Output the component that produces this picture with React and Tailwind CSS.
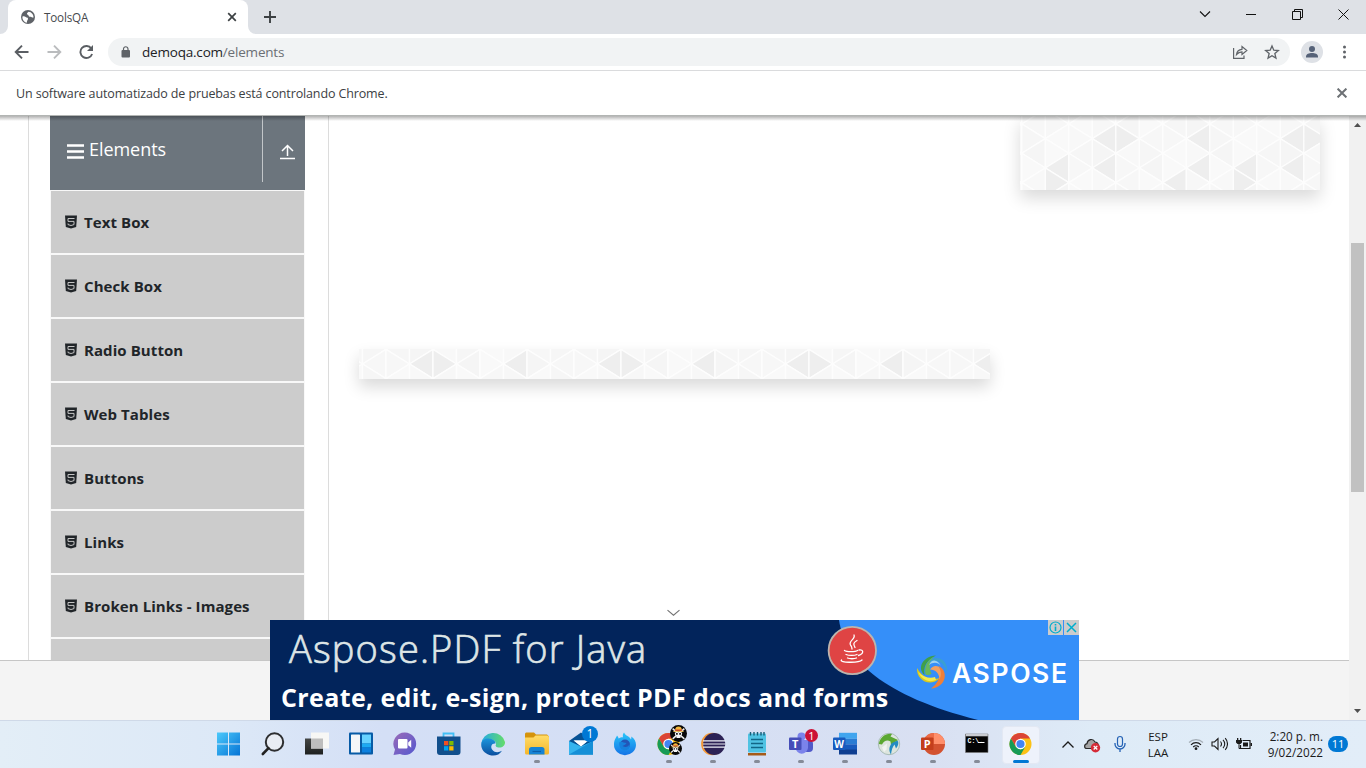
import React from "react";

const COL = 23.5;
const ROW = 29.3;

function TrianglePattern({ width, height, originX, originY, darkLeft, darkRight }) {
  // Even columns carry nodes at originY + n*ROW, odd ones are shifted by half a row.
  const shades = ["#f5f5f5", "#f7f7f7", "#f9f9f9", "#f6f6f6", "#f9f9f9", "#f7f7f7", "#f8f8f8"];
  const cells = [];
  const columns = Math.ceil(width / COL) + 2;
  for (let k = -1; k < columns; k++) {
    for (let half = -2; half < 8; half++) {
      const x0 = originX + k * COL;
      const x1 = x0 + COL;
      const y = originY + (half * ROW) / 2;
      const isLeft = (k + half) % 2 === 0;
      const points = isLeft
        ? `${x0},${y} ${x1},${y - ROW / 2} ${x1},${y + ROW / 2}`
        : `${x1},${y} ${x0},${y - ROW / 2} ${x0},${y + ROW / 2}`;
      const key = `${k}:${half}`;
      const dark = (isLeft ? darkLeft : darkRight).includes(key);
      const seed = Math.abs(((k + 8) % 8) * 5 + half * 3 + (isLeft ? 1 : 0));
      cells.push(
        <polygon key={key} points={points} fill={dark ? "#eeeeee" : shades[seed % 7]} stroke="#fdfdfd" strokeWidth="1.3" />
      );
    }
  }
  return (
    <svg width={width} height={height} className="block overflow-hidden">
      {cells}
    </svg>
  );
}

function Html5() {
  return (
    <svg width="12" height="14" viewBox="0 0 12 14" className="shrink-0">
      <path d="M0 .5h12l-.8 11.400-5.200 1.600-5.200-1.600z" fill="#212529" />
      <path d="M9.500 3.500H3v2.900h6v3.200l-3 .9-3-.9V8.500" fill="none" stroke="#c4c4c4" strokeWidth="1" />
    </svg>
  );
}

const items = ["Text Box", "Check Box", "Radio Button", "Web Tables", "Buttons", "Links", "Broken Links - Images"];

function ChromeIcon() {
  return (
    <svg width="24" height="24" viewBox="0 0 24 24">
      <circle cx="11.500" cy="12" r="11" fill="#fbc116" />
      <path d="M1.970 6.500A11 11 0 0 1 21.030 6.500H11.500L6.740 14.750z" fill="#db4437" />
      <path d="M1.970 6.500A11 11 0 0 0 11.500 23l4.760-8.250-4.760 2.750-4.760-2.750z" fill="#169b57" />
      <circle cx="11.500" cy="12" r="5.300" fill="#fff" />
      <circle cx="11.500" cy="12" r="4.100" fill="#4285f4" />
    </svg>
  );
}

function Skull({ size }) {
  return (
    <svg width={size} height={size} viewBox="0 0 16 16">
      <circle cx="8" cy="8" r="8" fill="#080808" />
      <path d="M2.500 3.500l11 9.500M13.500 3.500l-11 9.500" stroke="#eee" strokeWidth="1.500" />
      <path d="M4.600 7h6.800c.3 2-.8 3-1.500 3.200v2H6.100v-2C5.300 10 4.300 9 4.600 7z" fill="#f5f5f5" />
      <path d="M4.800 5C4.900 2.500 6.200 1.500 8 1.500s3.100 1 3.200 3.500z" fill="#f2b83c" />
      <path d="M4.600 4.300h6.800v1.200H4.600z" fill="#d43a25" />
      <path d="M3.200 6h9.600" stroke="#efc65c" strokeWidth="1" />
      <path d="M5.700 8.400h1.600M8.700 8.400h1.600" stroke="#111" strokeWidth="1.700" />
    </svg>
  );
}

function Slot({ children, running, active }) {
  return (
    <div className="w-11 h-12 flex items-center justify-center relative shrink-0">
      {active && <div className="absolute left-[3px] top-[5px] w-[38px] h-[38px] rounded bg-[#eef2fb] border border-[#e3e8f3]" />}
      <div className="relative w-6 h-6 -mt-px">{children}</div>
      {running && <div className="absolute bottom-[6px] left-[19px] w-1.5 h-[3px] rounded-full bg-[#858b98]" />}
      {active && <div className="absolute bottom-[6px] left-[14px] w-4 h-[3px] rounded-full bg-[#0078d4]" />}
    </div>
  );
}

function S({ children }) {
  return <svg width="24" height="24" viewBox="0 0 24 24" className="block overflow-visible">{children}</svg>;
}

function Taskbar() {
  return (
    <div className="h-12 shrink-0 flex items-center border-t border-[#cfd9e8] bg-[linear-gradient(90deg,#e3eef7_0%,#dce8f7_17%,#d4dff6_28%,#d5dff4_50%,#d9e0f2_68%,#deebf7_80%,#e2edf8_100%)] pl-[207px] relative font-['Open_Sans',sans-serif]">
      <svg width="0" height="0" className="absolute">
        <defs>
          <linearGradient id="win" x1="0" y1="0" x2="1" y2="1"><stop stopColor="#4cc9fb" /><stop offset="1" stopColor="#0574d5" /></linearGradient>
          <linearGradient id="chat" x1="0" y1="0" x2="1" y2="1"><stop stopColor="#9a6bb8" /><stop offset="1" stopColor="#5458cf" /></linearGradient>
          <linearGradient id="edge" x1="0" y1="0" x2="1" y2="0"><stop stopColor="#24a9e5" /><stop offset="1" stopColor="#65dd69" /></linearGradient>
          <linearGradient id="edge2" x1="0" y1="0" x2="0" y2="1"><stop stopColor="#1b95dc" /><stop offset="1" stopColor="#0b4e9e" /></linearGradient>
          <linearGradient id="folder" x1="0" y1="0" x2="0" y2="1"><stop stopColor="#ffdc68" /><stop offset="1" stopColor="#f6b62a" /></linearGradient>
          <linearGradient id="fox" x1="0" y1="0" x2="0" y2="1"><stop stopColor="#29c6fa" /><stop offset="1" stopColor="#1473e6" /></linearGradient>
          <linearGradient id="dark" x1="0" y1="0" x2="0" y2="1"><stop stopColor="#444645" /><stop offset="1" stopColor="#1e2020" /></linearGradient>
        </defs>
      </svg>
      <Slot><S><path d="M0 .5h11v11H0zM12 .5h11v11H12zM0 12.500h11v11H0zM12 12.500h11v11H12z" fill="url(#win)" /></S></Slot>
      <Slot><S><circle cx="13.500" cy="10" r="8.700" fill="#e9edf4" stroke="#2d2e30" strokeWidth="2" /><path d="M7.500 16.200L1.800 22" stroke="#222" strokeWidth="2.600" strokeLinecap="round" /></S></Slot>
      <Slot><S><path d="M0 6.500h18v16H0z" fill="url(#dark)" /><path d="M6 .5h18v16H6z" fill="#f7f7f5" /><path d="M6 6.500h12v10H6z" fill="#bdbdbd" /></S></Slot>
      <Slot><S><rect x="0" y=".5" width="24" height="22" rx="1" fill="#075ba6" /><rect x="2" y="2.500" width="9" height="18" rx=".6" fill="#f4f6f8" /><path d="M13 2.500h9v9h-9z" fill="#67d2ff" /><path d="M13 11.500h9v4h-9z" fill="#1daaf2" /><path d="M13 15.500h9v5h-9z" fill="#0c80df" /></S></Slot>
      <Slot><S><path d="M12 .5a11.300 11.300 0 1 1-5 21.500L.5 23 2 17.500A11.300 11.300 0 0 1 12 .5z" fill="url(#chat)" /><rect x="5" y="7" width="9.500" height="9.500" rx="1" fill="#fff" /><path d="M15.200 10.500l3-2.700v8l-3-2.500z" fill="#fff" /></S></Slot>
      <Slot><S><path d="M6.500 6V1.500h10V6" fill="none" stroke="#42bff5" strokeWidth="1.800" /><path d="M0 4.500h23.500v15.500a3 3 0 0 1-3 3H3a3 3 0 0 1-3-3z" fill="#124f8c" /><path d="M7 9h4.300v4.300H7z" fill="#f25022" /><path d="M12.200 9h4.300v4.300h-4.300z" fill="#7fba00" /><path d="M7 14.200h4.300v4.300H7z" fill="#00a4ef" /><path d="M12.200 14.200h4.300v4.300h-4.300z" fill="#ffb900" /></S></Slot>
      <Slot><S><path d="M.3 12A12 11.500 0 0 1 24 10c.3 3.500-2.500 5.500-5.500 5.500-3.500 0-4.500-1.500-3.500-3C15.500 9 11.500 7 7.500 7.500 3.500 8 1 10 .3 12z" fill="url(#edge)" /><path d="M.2 12.500C.5 7 6.500 5.500 10.500 7c3 1 4 3 4 4.500-4-.5-5.500 3.500-3 6.500s6.500 2.500 9.500.7C18.500 23 13.500 24.500 8.500 23 3.500 21.500 0 17 .2 12.500z" fill="url(#edge2)" /></S></Slot>
      <Slot running><S><path d="M0 2.500C0 1 .5.500 2 .5h7l2 2h11l2 2v4H0z" fill="#d5930b" /><path d="M0 5.500h8.500l2-2H22a2 2 0 0 1 2 2V21a1.500 1.500 0 0 1-1.500 1.500h-21A1.500 1.500 0 0 1 0 21z" fill="url(#folder)" /><path d="M4 22.500v-5C4 16 5 15 6.500 15h10.500c1.500 0 2.500 1 2.500 2.500v5z" fill="#1683d4" /><path d="M7.500 19.500h8.500" stroke="#0b5ea8" strokeWidth="1.200" /></S></Slot>
      <Slot>
        <S><path d="M0 9L12 .5 24 9v13.500H0z" fill="#075294" /><path d="M4.500 8.500h15L12 14z" fill="#fff" /><path d="M0 9l12 5.500L24 9v13.500H0z" fill="#35b4ee" /><path d="M0 22.500L24 9v13.500z" fill="#158fd7" /><path d="M5 8.500h14l-7 6z" fill="#fff" /></S>
        <div className="absolute left-[13px] -top-[6px] w-4 h-4 rounded-full bg-[#0078d4] text-white text-[12px] leading-4 text-center">1</div>
      </Slot>
      <Slot><S><path d="M1 12.500C1 8 3 6 4 3.500c1 1 1.500 2 1.600 3 1.400-1 3-1.300 4.400-1.200C9.500 3.500 10 1.500 11 .5c1 2.500 3 3 5 4.500 1 .7 1.500 1.500 2 2.500.5-1 .4-2 .3-3C21.500 6.500 23 9.500 23 13a11 10.500 0 0 1-22-.5z" fill="url(#fox)" /><circle cx="12" cy="12.500" r="5" fill="#2356b8" /><path d="M6.500 10c3-1 4 1 7 1-1 2-3 2-4 3 3 2 6 1 7-2 1 4-2 7-6 6-3-.7-5-4-4-8z" fill="#1681dd" /></S></Slot>
      <Slot running>
        <ChromeIcon />
        <div className="absolute left-[13px] -top-[7px]"><Skull size={17} /></div>
        <div className="absolute left-[12px] top-[10px]"><Skull size={13} /></div>
      </Slot>
      <Slot running><S><circle cx="11.300" cy="12" r="11.200" fill="#f59a38" /><circle cx="13.200" cy="12" r="11" fill="#2c2255" /><path d="M2 8.800h22.500M2 12h22.500M2 15.200h22.500" stroke="#edf0f8" strokeWidth="1.200" /></S></Slot>
      <Slot running><S><path d="M3 21h18v2.500H3z" fill="#a65b19" /><rect x="3" y="1.500" width="18" height="19" rx="1" fill="#50c3e3" /><path d="M5.500 0v3.500M9 0v3.500M12.500 0v3.500M16 0v3.500M19 0v3.500" stroke="#175d77" strokeWidth="1.400" /><path d="M6 7.500h12M6 11.500h12M6 15.500h12" stroke="#126686" strokeWidth="1.600" /></S></Slot>
      <Slot running>
        <S><circle cx="12.500" cy="4.500" r="4" fill="#7b83eb" /><rect x="14" y="8" width="10" height="12" rx="4" fill="#5059c9" /><path d="M6.500 8h12.500v8a6.300 6.500 0 0 1-12.500 0z" fill="#7b83eb" /><rect x="0" y="5.500" width="12.500" height="12.500" rx="1" fill="#464eb8" /><text x="6.200" y="15.800" textAnchor="middle" fontSize="11" fontWeight="700" fill="#fff">T</text></S>
        <div className="absolute left-[16px] -top-[3px] w-[13px] h-[13px] rounded-full bg-[#cc1236] text-white text-[11px] leading-[13px] text-center">1</div>
      </Slot>
      <Slot running><S><path d="M6 .8h18v6H6z" fill="#41a5ee" /><path d="M6 6.800h18v5.500H6z" fill="#2b7cd3" /><path d="M6 12.300h18V18H6z" fill="#185abd" /><path d="M6 17.500h18v5H6z" fill="#103f91" /><rect x="0" y="5.500" width="12.500" height="12.500" rx="1" fill="#185abd" /><text x="6.200" y="15.500" textAnchor="middle" fontSize="10" fontWeight="700" fill="#fff">W</text></S></Slot>
      <Slot running><S><circle cx="12" cy="12" r="10.700" fill="#dde5de" stroke="#9bb1aa" strokeWidth=".8" /><path d="M1.800 12C3 5 9 1 15 2l-1.500 2.500L21 8l-7 5-.5-3.500C10 7.500 7 9 5 12.500z" fill="#5ba832" /><path d="M14 22.500c-2.500-4-2-8 1-11.500l5.500-2.500c1.500 2 1 5-1.500 8l-1.500-4c-2 2.500-3 5.500-3.500 10z" fill="#248bc1" /><path d="M5 15.500l5-4-.5 6-2.500 2.500z" fill="#f1f4f2" /></S></Slot>
      <Slot running><S><circle cx="13" cy="12" r="11" fill="#d35230" /><path d="M13 1a11 11 0 0 1 11 11H13z" fill="#ff8f6b" /><path d="M13 1v11H2A11 11 0 0 1 13 1z" fill="#ed6c47" /><rect x="0" y="5.500" width="12.500" height="12.500" rx="1" fill="#c43e1c" /><text x="6.200" y="15.700" textAnchor="middle" fontSize="11" fontWeight="700" fill="#fff">P</text></S></Slot>
      <Slot running><S><path d="M.5 2h22.500v18.500H.5z" fill="#050505" stroke="#777" strokeWidth=".6" /><path d="M.8 2h22v2.300H.8z" fill="#c9cbd0" /><text x="2.500" y="11" fontSize="6.500" fontWeight="700" fill="#fff" fontFamily="Liberation Mono, monospace">C:\.</text><path d="M13 10.500h6.500" stroke="#fff" /></S></Slot>
      <Slot active><ChromeIcon /></Slot>

      <div className="flex items-center flex-1 h-full text-[#1b1b1b] pl-[18px]">
        <svg width="14" height="10" viewBox="0 0 14 10"><path d="M1.500 7.500L7 2l5.500 5.500" fill="none" stroke="currentColor" strokeWidth="1.300" /></svg>
        <svg width="18" height="16" viewBox="0 0 18 16" className="ml-[8px]"><path d="M4 11.500C1 11.500.7 7.500 4 6.700 4.500 2 10 1 12 5c3 0 4 3 3 6.500z" fill="#a5a5a5" stroke="#292929" strokeWidth="1.200" /><circle cx="12.500" cy="10.700" r="4.700" fill="#d52b37" /><path d="M10.700 8.900l3.600 3.600M14.300 8.900l-3.600 3.600" stroke="#fff" strokeWidth="1.300" /></svg>
        <svg width="14" height="18" viewBox="0 0 14 18" className="ml-[12px] -mt-px"><rect x="4.500" y="1.500" width="5" height="10" rx="2.500" fill="none" stroke="#2462b5" strokeWidth="1.200" /><path d="M2 8v1a5 5 0 0 0 10 0V8M7 14v3" fill="none" stroke="#2462b5" strokeWidth="1.300" /></svg>
        <div className="w-[30px] ml-[16px] text-center text-[11.5px] leading-4 pt-px"><div>ESP</div><div>LAA</div></div>
        <svg width="16" height="14" viewBox="0 0 16 14" className="ml-[15px] -mt-px"><path d="M1 5.500a10 10 0 0 1 14 0" fill="none" stroke="#a5aeb7" strokeWidth="1.200" /><path d="M3 7.800a7 7 0 0 1 10 0M5.200 10a4 4 0 0 1 5.600 0" fill="none" stroke="currentColor" strokeWidth="1.200" /><circle cx="8" cy="11.700" r="1.400" fill="currentColor" /></svg>
        <svg width="17" height="16" viewBox="0 0 17 16" className="ml-[7px] -mt-px"><path d="M1 6h2.500L7 2.500v11L3.500 10H1zM9.500 5.500a4 4 0 0 1 0 5M12 3.800a6 6 0 0 1 0 8.400M14.200 2.200a8.500 8.500 0 0 1 0 11.600" fill="none" stroke="currentColor" strokeWidth="1.100" /></svg>
        <svg width="17" height="16" viewBox="0 0 17 16" className="ml-[8px] -mt-px"><path d="M6.500 4.500h7.500v8H4.500V9" fill="none" stroke="currentColor" strokeWidth="1.200" /><path d="M7 6.500h5v4H7zM0 4h6v2.500L4.500 8h-3L0 6.500zM14.500 7H16v3h-1.500zM1 2h1.300v2H1zM4 2h1.300v2H4z" fill="currentColor" /><path d="M3 7v5.500h2" fill="none" stroke="currentColor" /></svg>
        <div className="w-[70px] text-right text-[11.7px] leading-4 whitespace-nowrap -mt-px"><div>2:20 p. m.</div><div>9/02/2022</div></div>
        <div className="ml-[5px] w-[20px] h-[16px] rounded-full bg-[#0078d4] text-white text-[11px] leading-4 text-center -mt-px">11</div>
      </div>
    </div>
  );
}

function BottomAd() {
  return (
    <div className="absolute left-[270px] bottom-0 w-[809px] h-[100px] bg-[#02245b] overflow-hidden font-['Open_Sans',sans-serif]">
      <svg width="809" height="100" className="absolute inset-0">
        <path d="M569 0C575 40 613 76 708 100H809V0z" fill="#358ff9" />
        <circle cx="582.300" cy="30.500" r="23.700" fill="#df4444" stroke="#bcb5ae" strokeWidth="1.800" />
        <g fill="none" stroke="#fff" strokeWidth="1.300" strokeLinecap="round">
          <path d="M584 15c2 4-6 6-3.500 10 1 1.500 1.500 2 1.500 4M587 20.500c-3.500 2-4 3.500-2 7" />
          <path d="M574.500 30.500c2 1.500 11 1.500 13 0M576 34.500c3 1.200 8.500 1.200 11 0M577.500 38c2 1 7 1 9 0M589 30c5-1 5 4-.5 5.500M571.500 40c-3 2.500 17 3.500 20.500 0" />
        </g>
        <g>
          <path d="M666 35.500c-14 1-19 13-11.500 19.500-1-8 1-14 11.500-19.500z" fill="#3f9f4a" />
          <path d="M664 37c-7 3-10 10-8.500 17.500 3 1 5 .5 6-1-3-6-2-12 2.500-16.500z" fill="#69b85a" />
          <path d="M647 48c-1 12 13 20 23 10-7 2-16 2-23-10z" fill="#d9c91f" />
          <path d="M648 52c5 5 12 7 17 5l1 3c-7 3-14 0-18-8z" fill="#f4ea4b" />
          <path d="M661 68.500c15-1 18-17 8-22.500 2 9 0 17-8 22.500z" fill="#ef7f38" />
          <path d="M660 49.500c2-3 5-4.500 8.500-3 3 4 3 9 1 13 0-6-4-10-9.500-10z" fill="#f2a05f" />
          <path d="M659 43c6-5 15-2 18 9 1-8-4-15-12-14-3 .5-5 2.500-6 5z" fill="#3b9fd0" />
          <path d="M659 45c4-3 9-3 12 1-3-6-9-8-12-1z" fill="#9dd3f0" />
        </g>
      </svg>
      <div className="relative flex flex-col">
        <div className="pl-[19px] h-[56px] text-[38px] leading-[56px] font-light text-[#dde5e6] whitespace-nowrap tracking-[1.15px] [-webkit-text-stroke:0.7px_#dde5e6]">Aspose.PDF for Java</div>
        <div className="pl-[11px] mt-[4px] h-[34px] text-[25px] leading-[34px] font-bold text-white whitespace-nowrap tracking-[0.38px]">Create, edit, e-sign, protect PDF docs and forms</div>
      </div>
      <div className="absolute left-[682px] top-[35px] text-[26.5px] leading-9 font-semibold text-white tracking-[1.6px] font-[Inter,sans-serif]">ASPOSE</div>
      <div className="absolute right-0 top-0 flex gap-px">
        <div className="w-[15px] h-[15px] bg-[#ccc] flex items-center justify-center">
          <svg width="13" height="13" viewBox="0 0 13 13" fill="none" stroke="#00aecd" strokeWidth="1.200"><circle cx="6.500" cy="6.500" r="5.500" /><path d="M6.500 5.500v4.500M6.500 3v1.500" strokeWidth="1.600" /></svg>
        </div>
        <div className="w-[15px] h-[15px] bg-[#ccc] flex items-center justify-center">
          <svg width="11" height="11" viewBox="0 0 11 11" fill="none" stroke="#00aecd" strokeWidth="1.500"><path d="M1 1l9 9M10 1l-9 9" /></svg>
        </div>
      </div>
    </div>
  );
}

export default function App() {
  return (
    <div className="w-[1366px] h-[768px] flex flex-col overflow-hidden bg-white font-['Open_Sans',sans-serif]">
      <div className="h-[34px] shrink-0 bg-[#dee1e6] flex">
        <svg width="8" height="34" className="shrink-0"><path d="M8 26a8 8 0 0 1-8 8h8z" fill="#fff" /></svg>
        <div className="w-[240px] bg-white rounded-t-lg flex items-center pl-[13px]">
          <svg width="14" height="14" viewBox="0 0 14 14"><circle cx="7" cy="7" r="7" fill="#5f6368" /><path d="M1.500 6.500c1.200-.5 2.500-.2 3.200.5.800.8 2 .3 2.300 1.500.3 1.200-1 1.500-1.200 4.300C3 12 1 9.500 1.500 6.500zM7.500 1.700c-.5 1-1.700 1-1.500 2.200.2 1 1.300.6 1.500 1.600.2.900 1 1.300 2 1.200 1.200-.1 1.500 1.300 3 .8C12.700 4.500 10.500 2 7.500 1.700z" fill="#fff" /></svg>
          <span className="ml-[9px] text-[11.7px] leading-4 text-[#45494d] tracking-[-0.2px]">ToolsQA</span>
          <svg width="10" height="10" viewBox="0 0 10 10" className="ml-auto mr-[11px]"><path d="M1.200 1.200l7.600 7.600M8.800 1.200L1.200 8.800" stroke="#3c4043" strokeWidth="1.700" /></svg>
        </div>
        <svg width="8" height="34" className="shrink-0"><path d="M0 26a8 8 0 0 0 8 8H0z" fill="#fff" /></svg>
        <svg width="12" height="12" viewBox="0 0 12 12" className="ml-[8px] mt-[11px]"><path d="M6 0v12M0 6h12" stroke="#3c4043" strokeWidth="1.900" /></svg>
        <div className="ml-auto flex items-start pt-[9px] pr-[17px] text-[#111]">
          <svg width="12" height="10" viewBox="0 0 12 10"><path d="M1 2.500l5 5 5-5" fill="none" stroke="currentColor" strokeWidth="1.100" /></svg>
          <svg width="10" height="11" viewBox="0 0 10 11" className="ml-[35px]"><path d="M0 5.500h10" stroke="currentColor" /></svg>
          <svg width="11" height="11" viewBox="0 0 11 11" className="ml-[36px]"><path d="M.5 2.500h8v8h-8zM2.500 2.500V.5h8v8h-2" fill="none" stroke="currentColor" /></svg>
          <svg width="11" height="11" viewBox="0 0 11 11" className="ml-[35px]"><path d="M.5.5l10 10M10.500.5l-10 10" stroke="currentColor" /></svg>
        </div>
      </div>

      <div className="h-[37px] shrink-0 bg-white border-b border-[#dadbdd] flex items-center pl-[14px] pr-[20px]">
        <svg width="15" height="14" viewBox="0 0 15 14" fill="none" stroke="#5a5e63" strokeWidth="1.900"><path d="M14.500 7H2M8 .7L1.700 7 8 13.300" /></svg>
        <svg width="15" height="14" viewBox="0 0 15 14" fill="none" stroke="#babcbe" strokeWidth="1.900" className="ml-[18px]"><path d="M.5 7H13M7 .7L13.300 7 7 13.300" /></svg>
        <svg width="15" height="14" viewBox="0 0 15 14" fill="none" stroke="#5a5e63" strokeWidth="1.900" className="ml-[17px]"><path d="M12.300 3.500a6 6 0 1 0 .8 5.500" /><path d="M14 0v6H8z" fill="#5a5e63" stroke="none" /></svg>
        <div className="ml-[14px] h-7 w-[1182px] rounded-full bg-[#f1f3f4] flex items-center pl-[13px] pr-[10px]">
          <svg width="10" height="12" viewBox="0 0 10 12"><rect x=".5" y="4" width="8.500" height="7.500" rx="1" fill="#5f6368" /><path d="M2.500 5V3A2.200 2.200 0 0 1 7 3v2" fill="none" stroke="#5f6368" strokeWidth="1.200" /></svg>
          <span className="ml-[11px] text-[13.5px] leading-5 text-[#202124] whitespace-nowrap tracking-[-0.2px]">demoqa.com<span className="text-[#6b6f74]">/elements</span></span>
          <svg width="16" height="14" viewBox="0 0 16 14" className="ml-auto mr-px" fill="none" stroke="#5f6368" strokeWidth="1.200"><path d="M1.600 3v10.300H12V10.500M4.500 9.500c.5-3.500 2.500-5 5.500-5.200V1.500l4.800 4-4.800 4V6.900C7.500 7 6 7.800 4.500 9.500z" /></svg>
          <svg width="16" height="16" viewBox="0 0 24 24" className="ml-[15px]" fill="none" stroke="#5f6368" strokeWidth="2"><path d="M12 3l2.700 6.300 6.800.6-5.200 4.500 1.600 6.700-5.900-3.600-5.900 3.600 1.600-6.700L2.500 9.900l6.800-.6z" /></svg>
        </div>
        <svg width="22" height="22" viewBox="0 0 22 22" className="ml-[11px]"><circle cx="11" cy="11" r="11" fill="#dee1e6" /><circle cx="11" cy="8" r="3" fill="#566278" /><path d="M5 16.500v-1c0-2.500 3-3.500 6-3.500s6 1 6 3.500v1z" fill="#566278" /></svg>
        <svg width="4" height="14" viewBox="0 0 4 14" className="ml-auto" fill="#5f6368"><circle cx="2.500" cy="2" r="1.500" /><circle cx="2.500" cy="7" r="1.500" /><circle cx="2.500" cy="12" r="1.500" /></svg>
      </div>

      <div className="h-[45px] shrink-0 bg-white border-b border-[#b2b5b3] flex items-center justify-between pl-4 pr-[19px] relative">
        <span className="text-[12.5px] leading-5 text-[#3c4043] whitespace-nowrap tracking-[-0.13px] pt-px">Un software automatizado de pruebas está controlando Chrome.</span>
        <svg width="10" height="10" viewBox="0 0 10 10"><path d="M.6.6l8.800 8.800M9.400.6L.6 9.400" stroke="#6d7175" strokeWidth="2" /></svg>
        <div className="absolute left-0 right-0 top-[45px] h-[5px] z-10 bg-linear-to-b from-black/30 to-transparent" />
      </div>

      <div className="flex-1 min-h-0 flex relative">
        <div className="flex-1 flex flex-col">
          <div className="h-[544px] flex pl-[28px] overflow-hidden">
            <div className="w-[301px] border-x border-[#dcdcdc] pl-[21px]">
              <div className="w-[255px]">
                <div className="h-[74px] bg-[#6c757d] flex text-white">
                  <div className="flex w-[213px] h-[66px] items-center pl-[17px] border-r border-[#c2c6c9]">
                    <svg width="17" height="15" viewBox="0 0 17 15" className="mt-[5px]"><path d="M0 1.500h17M0 7.500h17M0 13.500h17" stroke="#fff" strokeWidth="2.500" /></svg>
                    <span className="ml-[5px] text-[18px] leading-6 tracking-[-0.05px]">Elements</span>
                  </div>
                  <svg width="16" height="16" viewBox="0 0 16 16" className="ml-[17px] mt-[28px]" fill="none" stroke="#fff" strokeWidth="1.500"><path d="M7.500 12V1.500M2 7l5.500-5.500L13 7M0 14.500h15" /></svg>
                </div>
                {items.map((t) => (
                  <div key={t} className="h-16 bg-[#ccc] border border-[#f8f8f8] flex items-center pl-[14px] gap-[7px]">
                    <Html5 />
                    <span className="text-[15px] leading-6 font-bold text-[#212529] whitespace-nowrap tracking-[0.08px]">{t}</span>
                  </div>
                ))}
                <div className="h-16 bg-[#ccc] border border-[#f8f8f8]" />
              </div>
            </div>
            <div className="w-[632px] ml-[30px] pt-[233px]">
              <div className="w-[631px] h-[30px] shadow-[0_8px_16px_rgba(0,0,0,0.15)]">
                <TrianglePattern width={631} height={30} originX={3.5} originY={15} darkLeft={["2:0", "6:0", "10:0", "14:0", "18:0", "22:0", "26:0"]} darkRight={["3:0", "11:0", "19:0"]} />
              </div>
            </div>
            <div className="ml-[29px] w-[300px] h-[74px] shadow-[0_8px_16px_rgba(0,0,0,0.15)]">
              <TrianglePattern width={300} height={74} originX={1.8} originY={8} darkLeft={["3:1", "7:1", "11:1", "1:3", "3:3", "7:3", "9:3", "11:3", "6:4"]} darkRight={["4:1", "12:1", "1:4", "9:4"]} />
            </div>
          </div>
          <div className="flex-1 border-t border-[#c6c6c6] bg-[#f4f4f4]" />
        </div>
        <div className="w-[17px] bg-[#f1f1f1] flex flex-col items-center">
          <svg width="7" height="4" viewBox="0 0 7 4" className="mt-[7px]"><path d="M0 4h7L3.500 0z" fill="#505050" /></svg>
          <div className="w-[13px] h-[249px] bg-[#c1c1c1] mt-[116px]" />
          <svg width="7" height="4" viewBox="0 0 7 4" className="mt-auto mb-[7px]"><path d="M0 0h7L3.500 4z" fill="#505050" /></svg>
        </div>
        <svg width="14" height="8" viewBox="0 0 14 8" className="absolute left-[666px] top-[493px]"><path d="M1.500 1.200l6 5 6-5" fill="none" stroke="#737373" strokeWidth="1.100" /></svg>
        <BottomAd />
      </div>
      <Taskbar />
    </div>
  );
}
